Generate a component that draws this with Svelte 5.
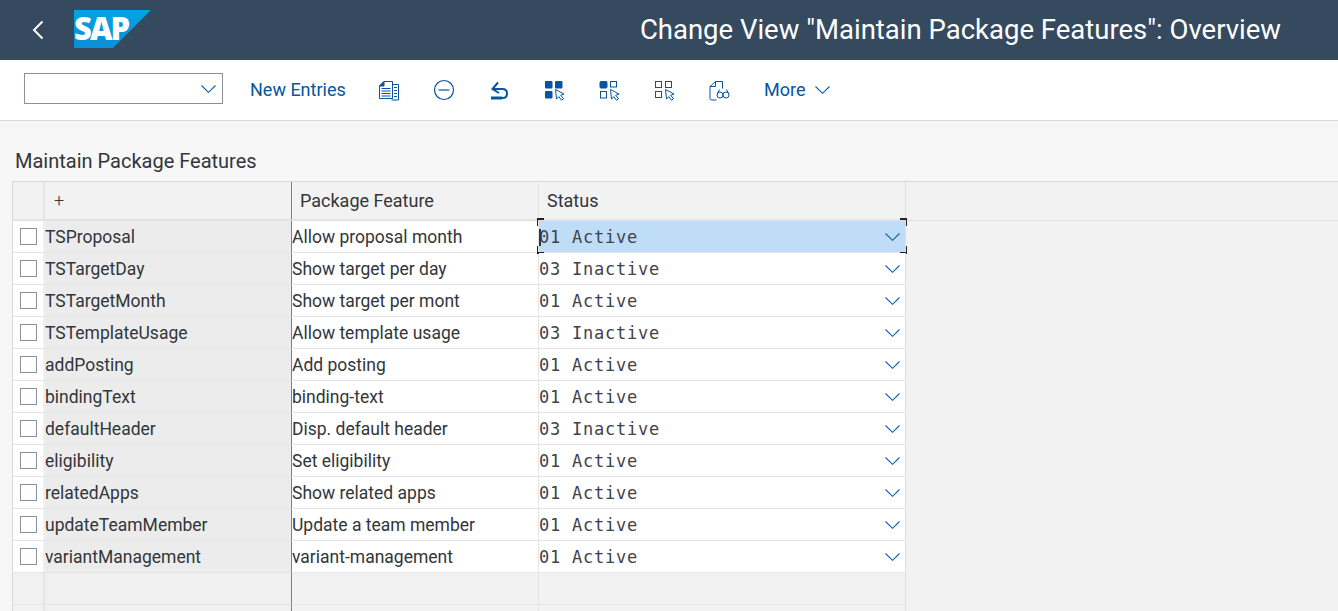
<script>
  const rows = [
    ['TSProposal', 'Allow proposal month', '01 Active'],
    ['TSTargetDay', 'Show target per day', '03 Inactive'],
    ['TSTargetMonth', 'Show target per mont', '01 Active'],
    ['TSTemplateUsage', 'Allow template usage', '03 Inactive'],
    ['addPosting', 'Add posting', '01 Active'],
    ['bindingText', 'binding-text', '01 Active'],
    ['defaultHeader', 'Disp. default header', '03 Inactive'],
    ['eligibility', 'Set eligibility', '01 Active'],
    ['relatedApps', 'Show related apps', '01 Active'],
    ['updateTeamMember', 'Update a team member', '01 Active'],
    ['variantManagement', 'variant-management', '01 Active']
  ];
</script>

{#snippet chevron(w = 15)}
  <svg class="chev" width={w} height="8" viewBox="0 0 15 8"><path d="M.5.5l7 6.800 7-6.800" fill="none" stroke="#0b5fb0" stroke-width="1.100"/></svg>
{/snippet}

{#snippet cursor()}
  <path d="M12.500 10.500l8.500 4.500-3.300 1.200 2.800 3.600-2 1.400-2.700-3.600-2.300 2.500z" fill="#fff" stroke="#0854a0" stroke-width="1"/>
{/snippet}

<div class="page">
  <header class="shell">
    <button class="back" aria-label="Back">
      <svg width="12" height="20" viewBox="0 0 12 20"><path d="M10.500 1.500L2 10l8.500 8.500" fill="none" stroke="#fff" stroke-width="2"/></svg>
    </button>
    <svg class="logo" width="77" height="38" viewBox="0 0 77 38">
      <defs>
        <linearGradient id="sapblue" x1="0" y1="0" x2="0" y2="1">
          <stop offset="0" stop-color="#00a4e4"/><stop offset="1" stop-color="#0a8fd6"/>
        </linearGradient>
      </defs>
      <polygon points="0,0 77,0 39,38 0,38" fill="url(#sapblue)"/>
      <text x="0" y="30" class="logotext">SAP</text>
    </svg>
    <h1>Change View "Maintain Package Features": Overview</h1>
  </header>

  <nav class="toolbar">
    <div class="select">{@render chevron()}</div>
    <span class="btn first">New Entries</span>
    <div class="icons">
      <span class="ico">
        <svg width="22" height="22" viewBox="0 0 22 22" fill="none" stroke="#0854a0">
          <path d="M14.500 5.500h6v15.500h-7" />
          <path d="M6 2.500h8.500v17h-13V7z" fill="#fff"/>
          <path d="M1.500 7h4.500V2.500z" fill="#0854a0"/>
          <path d="M3.500 9.500h9M3.500 12h9M3.500 14.500h9M3.500 17h9M16 8.500h3M16 11.500h3M16 14.500h3M16 17.500h3" stroke-width="1.200"/>
        </svg>
      </span>
      <span class="ico">
        <svg width="22" height="22" viewBox="0 0 22 22" fill="none" stroke="#0854a0" stroke-width="1.200"><circle cx="11" cy="11" r="9.500"/><path d="M5.500 11h11"/></svg>
      </span>
      <span class="ico">
        <svg width="22" height="22" viewBox="0 0 22 22" fill="none" stroke="#0854a0" stroke-width="2"><path d="M10 3.500L4.500 10l6.500 4"/><path d="M5 10h9.500c3 0 4.500 1.800 4.500 4.500S17.500 19 14.500 19H3" /><path d="M3 19h11" stroke-width="3"/></svg>
      </span>
      <span class="ico">
        <svg width="22" height="22" viewBox="0 0 22 22">
          <rect x="2" y="2" width="7.500" height="7.500" rx="1" fill="#0854a0"/><rect x="12" y="2" width="7.500" height="7.500" rx="1" fill="#0854a0"/><rect x="2" y="12" width="7.500" height="7.500" rx="1" fill="#0854a0"/>
          {@render cursor()}
        </svg>
      </span>
      <span class="ico">
        <svg width="22" height="22" viewBox="0 0 22 22" fill="none" stroke="#0854a0">
          <rect x="2" y="2.500" width="7" height="6.500" rx="1" fill="#0854a0"/><rect x="12.500" y="2.500" width="6" height="5.500"/><rect x="2.500" y="12.500" width="6" height="6.500"/>
          {@render cursor()}
        </svg>
      </span>
      <span class="ico">
        <svg width="22" height="22" viewBox="0 0 22 22" fill="none" stroke="#0854a0">
          <rect x="2.500" y="2.500" width="6" height="6"/><rect x="12.500" y="2.500" width="6" height="6"/><rect x="2.500" y="12.500" width="6" height="6"/>
          {@render cursor()}
        </svg>
      </span>
      <span class="ico">
        <svg width="22" height="22" viewBox="0 0 22 22" fill="none" stroke="#0854a0">
          <path d="M8.500 21H3.500a1.500 1.500 0 0 1-1.500-1.500V7.500L7.500 2.500h7v7"/>
          <path d="M2 7.500h5.500v-5"/>
          <circle cx="12" cy="16" r="3"/><circle cx="18" cy="16" r="3"/>
          <path d="M14.500 14.500a1.500 1.500 0 0 1 1 0M9.500 14.500l2-4M20.500 14.500l-2-4"/>
        </svg>
      </span>
    </div>
    <span class="btn more">More</span>
    {@render chevron()}
  </nav>

  <main class="content">
    <h2>Maintain Package Features</h2>
    <div class="table">
      <div class="row head">
        <div class="sel"></div>
        <div class="key">+</div>
        <div class="feat">Package Feature</div>
        <div class="stat">Status</div>
      </div>
      {#each rows as row, i}
        <div class="row">
          <div class="sel"><span class="box"></span></div>
          <div class="key">{row[0]}</div>
          <div class="feat">{row[1]}</div>
          <div class="stat" class:focus={i === 0}>
            {#if i === 0}<i class="caret"></i><i class="corner tl"></i><i class="corner tr"></i><i class="corner bl"></i><i class="corner br"></i>{/if}
            <span class="mono">{row[2]}</span>
            {@render chevron()}
          </div>
        </div>
      {/each}
      <div class="row blank">
        <div class="sel"></div><div class="key"></div><div class="feat"></div><div class="stat"></div>
      </div>
      <div class="row blank">
        <div class="sel"></div><div class="key"></div><div class="feat"></div><div class="stat"></div>
      </div>
    </div>
  </main>
</div>

<style>
  :global(body) {
    margin: 0;
    background: #f7f7f7;
    font-family: Roboto, "Liberation Sans", sans-serif;
    color: #32363a;
  }

  .page {
    height: 611px;
    overflow: hidden;
  }

  .shell {
    height: 60px;
    background: #354a5f;
    display: flex;
    align-items: center;
    color: #fff;
    box-sizing: border-box;
    padding-left: 32px;
  }

  .back {
    all: unset;
    width: 12px;
    height: 20px;
    display: block;
    margin-right: 30px;
  }

  .logo {
    margin-top: -3px;
    overflow: visible;
  }

  .logotext {
    font: 800 31px "Open Sans", sans-serif;
    letter-spacing: -2px;
    fill: #fff;
  }

  .shell h1 {
    flex: 1;
    margin: -2px 57px 0 0;
    text-align: right;
    font-size: 27.500px;
    font-weight: 400;
  }

  .toolbar {
    height: 61px;
    background: #fff;
    border-bottom: 1px solid #d9d9d9;
    box-sizing: border-box;
    display: flex;
    align-items: center;
    padding-left: 24px;
    color: #0854a0;
  }

  .select {
    width: 199px;
    height: 31px;
    margin-top: -3px;
    box-sizing: border-box;
    border: 1px solid #89919a;
    display: flex;
    align-items: center;
    justify-content: flex-end;
    padding-right: 6px;
  }

  .btn {
    font-size: 18px;
    line-height: 20px;
  }

  .first {
    margin-left: 27px;
    width: 95px;
    white-space: nowrap;
  }

  .icons {
    display: flex;
    margin-left: 16px;
  }

  .ico {
    width: 55px;
    display: flex;
    justify-content: center;
  }

  .more {
    margin: 0 10px 0 18px;
  }

  .chev {
    display: block;
    flex-shrink: 0;
  }

  .content {
    padding-top: 28px;
  }

  h2 {
    margin: 0 0 8px 15px;
    font-size: 20px;
    line-height: 24px;
    font-weight: 400;
  }

  .table {
    margin-left: 12px;
    border-top: 1px solid #d9d9d9;
    border-left: 1px solid #d9d9d9;
    font-size: 17.500px;
    background: #f2f2f2;
    height: 440px;
  }

  .row {
    display: grid;
    grid-template-columns: 32px 247px 247px 367px;
    height: 32px;
  }

  .row > div {
    display: flex;
    align-items: center;
    box-sizing: border-box;
    white-space: nowrap;
    border-bottom: 1px solid #e5e5e5;
  }

  .head {
    height: 39px;
    box-sizing: border-box;
    border-bottom: 1px solid #e0e0e0;
    font-size: 18px;
  }

  .head > div {
    background: #f2f2f2;
  }

  .head .key {
    padding-left: 9px;
    font-weight: 300;
  }

  .head .feat {
    padding-left: 8px;
  }

  .head .stat {
    padding-left: 8px;
  }

  .sel {
    background: #fff;
    border-right: 2px solid #f0f0f0;
    padding-left: 7px;
  }

  .head .sel,
  .blank .sel {
    background: #f2f2f2;
    border-right-color: #e5e5e5;
  }

  .key {
    background: #ececec;
    border-right: 1px solid #808080;
  }

  .feat {
    background: #fff;
    border-right: 1px solid #e5e5e5;
  }

  .stat {
    background: #fff;
    border-right: 1px solid #e0e0e0;
    position: relative;
    justify-content: space-between;
    padding-right: 5px;
  }

  .blank .key {
    background: #f0f0f0;
  }

  .blank .feat,
  .blank .stat {
    background: #f2f2f2;
  }

  .box {
    width: 17px;
    height: 17px;
    box-sizing: border-box;
    border: 1px solid #89919a;
    background: #fff;
    display: block;
  }

  .mono {
    font-family: "DejaVu Sans Mono", monospace;
    font-size: 17px;
    letter-spacing: .77px;
    margin: 1px 0 0;
    color: #3f4347;
  }

  .stat.focus {
    background: #bfddf7;
  }

  .caret {
    position: absolute;
    left: 0;
    top: 8px;
    width: 2px;
    height: 17px;
    background: #32363a;
  }

  .corner {
    position: absolute;
    width: 6px;
    height: 6px;
    border: 0 solid #222;
  }

  .tl { left: -2px; top: -3px; border-width: 2px 0 0 1px; }
  .tr { right: -2px; top: -3px; border-width: 2px 1px 0 0; }
  .bl { left: -2px; bottom: -2px; border-width: 0 0 2px 1px; }
  .br { right: -2px; bottom: -2px; border-width: 0 1px 2px 0; }
</style>
